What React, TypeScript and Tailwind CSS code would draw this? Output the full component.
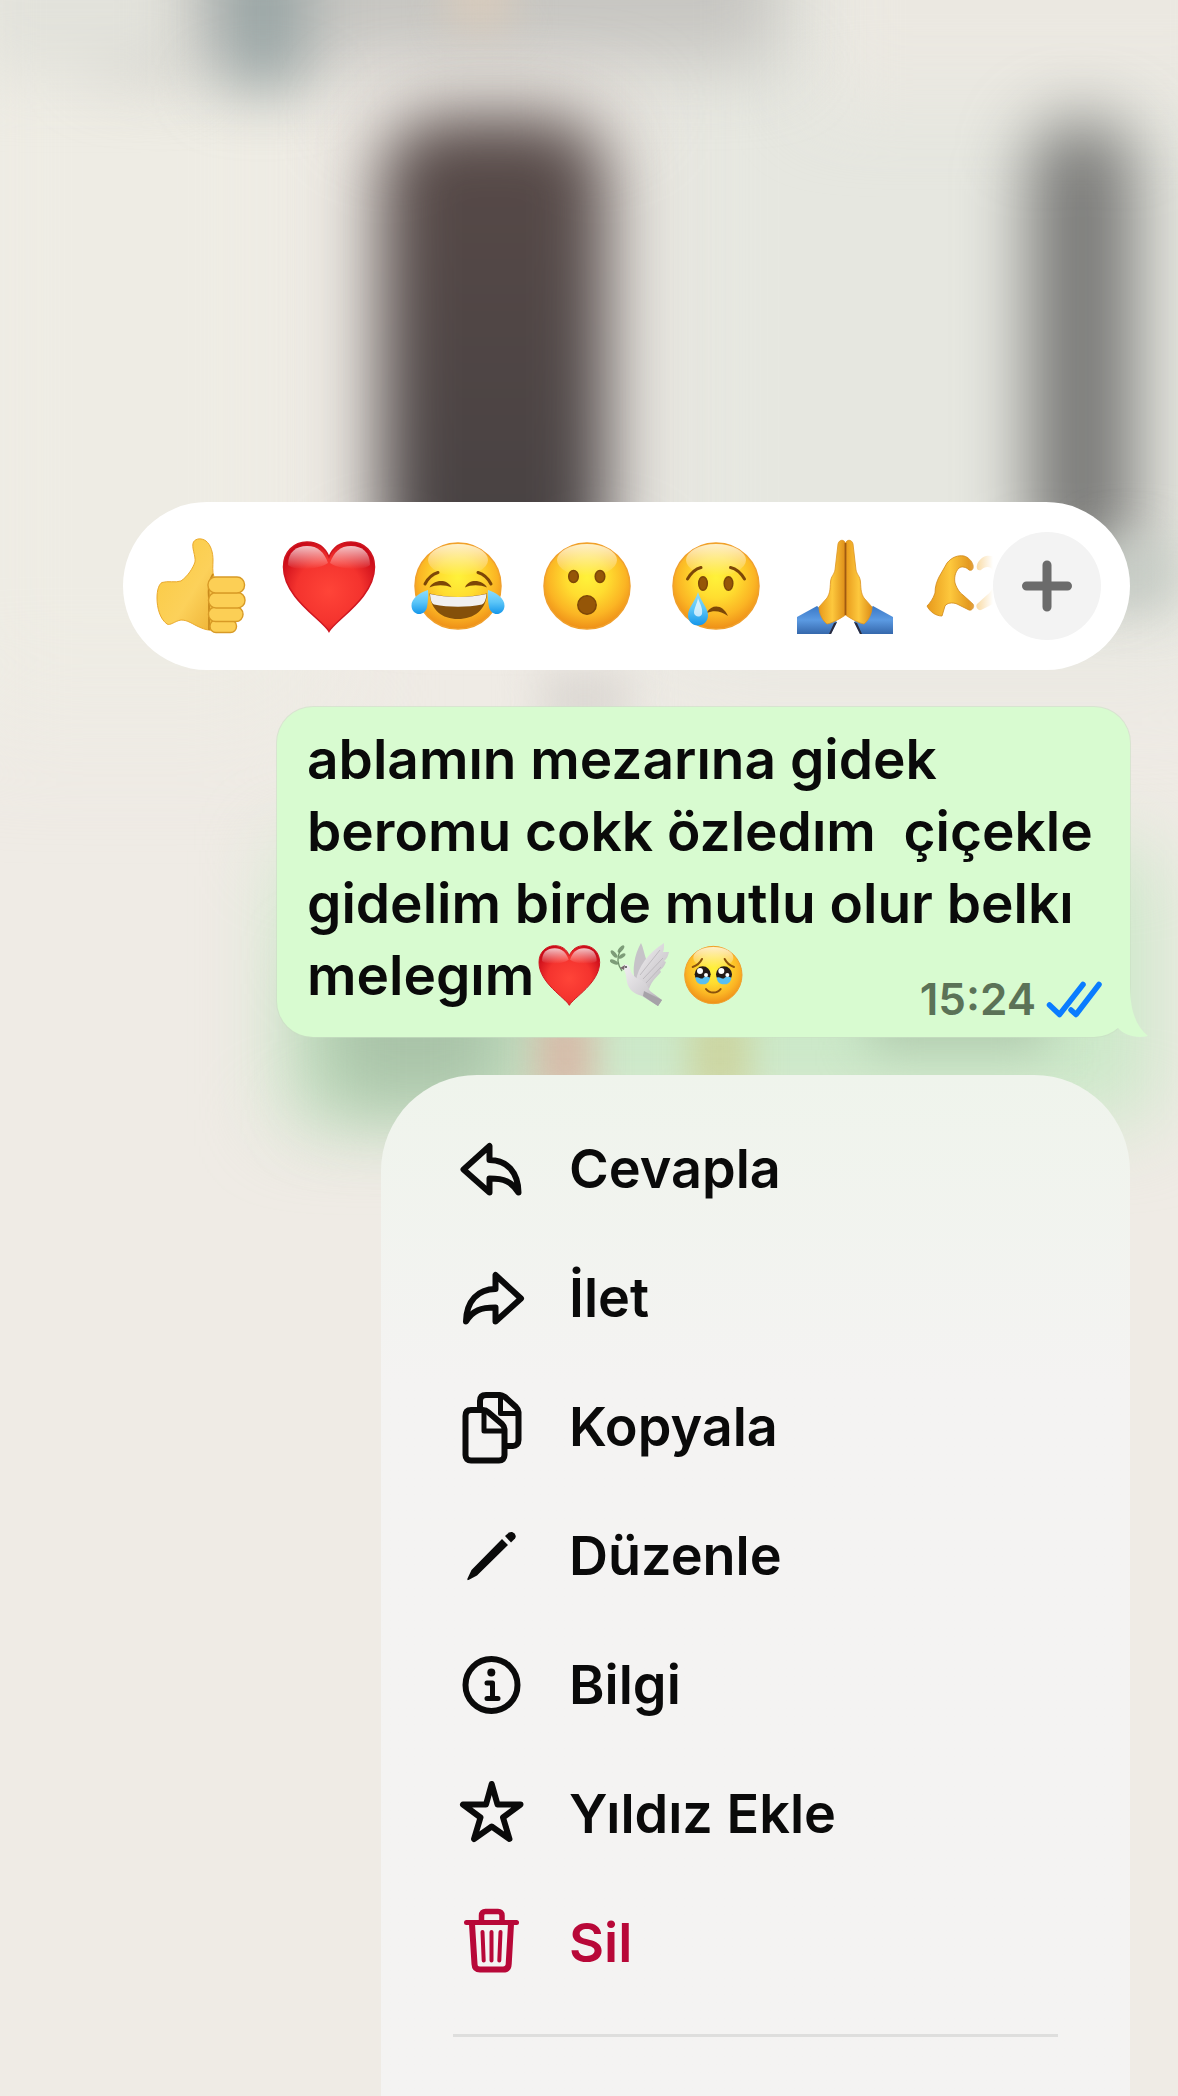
import type { ReactNode } from "react";

type IconProps = { className?: string };

const reactions = [
  { label: "Beğen", Icon: ThumbsUp },
  { label: "Kalp", Icon: Heart },
  { label: "Gülme", Icon: Laughing },
  { label: "Şaşırma", Icon: Surprised },
  { label: "Üzülme", Icon: Crying },
  { label: "Teşekkür", Icon: Praying },
  { label: "Kalp eller", Icon: HeartHands },
];

const actions = [
  { label: "Cevapla", Icon: ReplyIcon },
  { label: "İlet", Icon: ForwardIcon },
  { label: "Kopyala", Icon: CopyIcon },
  { label: "Düzenle", Icon: PencilIcon },
  { label: "Bilgi", Icon: InfoIcon },
  { label: "Yıldız Ekle", Icon: StarIcon },
  { label: "Sil", Icon: TrashIcon, danger: true },
];

// Gradients shared by all the emoji drawings
function EmojiDefs() {
  return (
    <svg className="absolute size-0" aria-hidden="true">
      <defs>
        <radialGradient id="face" cx="0.5" cy="0.4" r="0.6">
          <stop offset="0" stopColor="#fff23a" />
          <stop offset="0.4" stopColor="#ffdd30" />
          <stop offset="0.75" stopColor="#fbb524" />
          <stop offset="1" stopColor="#ee8f18" />
        </radialGradient>
        <linearGradient id="shine" x1="0" y1="0" x2="0" y2="1">
          <stop offset="0" stopColor="#fff" stopOpacity="0.75" />
          <stop offset="1" stopColor="#fff" stopOpacity="0" />
        </linearGradient>
        <radialGradient id="heart" cx="0.5" cy="0.55" r="0.6">
          <stop offset="0" stopColor="#ff4438" />
          <stop offset="0.6" stopColor="#f4332e" />
          <stop offset="1" stopColor="#c90a18" />
        </radialGradient>
        <linearGradient id="tear" x1="0" y1="0" x2="0" y2="1">
          <stop offset="0" stopColor="#8fdcfb" />
          <stop offset="0.5" stopColor="#5cc6f8" />
          <stop offset="1" stopColor="#1496ea" />
        </linearGradient>
        <linearGradient id="skin" x1="0" y1="0" x2="1" y2="1">
          <stop offset="0" stopColor="#fbc93f" />
          <stop offset="0.6" stopColor="#fcd15a" />
          <stop offset="1" stopColor="#eeb235" />
        </linearGradient>
        <linearGradient id="palm" x1="0" y1="0" x2="1" y2="0">
          <stop offset="0" stopColor="#e89a1c" />
          <stop offset="0.5" stopColor="#fdc83d" />
          <stop offset="1" stopColor="#dd8d18" />
        </linearGradient>
        <linearGradient id="sleeve" x1="0" y1="0" x2="0" y2="1">
          <stop offset="0" stopColor="#3a78c6" />
          <stop offset="0.5" stopColor="#5b9ae2" />
          <stop offset="1" stopColor="#3568ac" />
        </linearGradient>
        <linearGradient id="feather" x1="0" y1="0" x2="1" y2="1">
          <stop offset="0" stopColor="#f2f0f2" />
          <stop offset="0.6" stopColor="#d3d0d4" />
          <stop offset="1" stopColor="#a8a4ab" />
        </linearGradient>
      </defs>
    </svg>
  );
}

function Emoji({ className = "size-24", children }: IconProps & { children: ReactNode }) {
  return (
    <svg viewBox="0 0 96 96" fill="none" overflow="visible" className={className} aria-hidden="true">
      {children}
    </svg>
  );
}

function Face() {
  return (
    <>
      <circle cx="47" cy="48" r="43" fill="url(#face)" stroke="#f0a02c" strokeWidth="1.5" />
      <ellipse cx="47" cy="22" rx="30" ry="16" fill="url(#shine)" />
    </>
  );
}

function ThumbsUp() {
  return (
    <Emoji>
      <path
        d="M4 60C4 52 6 46 9 44.500C15 42.500 22 45 28 43C35 38 40 30 42 24C43 18 38 9 40.500 4C43 0 49 0 53 3C58 7 60 15 60 22C60 28 59 33 61 39L62 92C56 93 50 91 44 88C38 85 34 82 28 82C22 83 17 88 14 86C7 81 4 70 4 60Z"
        fill="url(#skin)"
        stroke="#eaa92c"
        strokeWidth="1"
      />
      <path d="M60 36C56 42 55 52 56 62V92" stroke="#c98a1c" strokeWidth="1.800" />
      <g fill="#fccf55" stroke="#d89a26" strokeWidth="1.400">
        <rect x="57" y="82" width="26.500" height="12.500" rx="6" />
        <rect x="55.500" y="69" width="34.500" height="14.500" rx="7" />
        <rect x="55.500" y="54.500" width="36.500" height="15.500" rx="7.500" />
        <rect x="55" y="39" width="36.500" height="16" rx="7.500" />
      </g>
    </Emoji>
  );
}

function Heart({ className }: IconProps) {
  return (
    <Emoji className={className}>
      <path
        d="M47 93.500C41 82 1.500 60 1.500 29C1.500 14 12 4 25 4C35 4 43 9 47 19C51 9 59 4 69 4C82 4 92.500 14 92.500 29C92.500 60 53 82 47 93.500Z"
        fill="url(#heart)"
        stroke="#cf1620"
        strokeWidth="1.500"
      />
      <path d="M6 27C6 14 14 8 25 8C36 8 42 14 46 25C38 31 14 34 6 27Z" fill="url(#shine)" />
      <path d="M88 27C88 14 80 8 69 8C58 8 52 14 48 25C56 31 80 34 88 27Z" fill="url(#shine)" />
    </Emoji>
  );
}

function Laughing() {
  return (
    <Emoji>
      <Face />
      <g stroke="#7d4707" strokeWidth="3" strokeLinecap="round">
        <path d="M14 46C17 40 22 36 27 34.500" />
        <path d="M67 34.500C72 36 77 40 80 46" />
      </g>
      <g fill="#7d4707">
        <path d="M18.500 49.500C22 42 36 40 40.500 49.500C34 46.500 25 46.500 18.500 49.500Z" />
        <path d="M54 49.500C58 40 72 42 76 49.500C69 46.500 60 46.500 54 49.500Z" />
      </g>
      <path d="M18.500 55.500C36 60 58 60 76 55.500C75 72 63 81 47 81C31 81 20 72 18.500 55.500Z" fill="#84500a" />
      <path d="M19 56C36 60 58 60 75.500 56C75 61 74 65 71 66.500C56 69.500 38 69.500 23 66.500C20 65 19.500 61 19 56Z" fill="#f1f0ef" />
      <path d="M17 52C10 54 0 60 0.500 68C1 78 14 79 16 69C17 64 17.500 57 17 52Z" fill="url(#tear)" />
      <path d="M77 52C84 54 94 60 93.500 68C93 78 80 79 78 69C77 64 76.500 57 77 52Z" fill="url(#tear)" />
    </Emoji>
  );
}

function Surprised() {
  return (
    <Emoji>
      <Face />
      <g fill="#955608" stroke="#7d4707" strokeWidth="1.500">
        <ellipse cx="33.500" cy="38.500" rx="4.800" ry="6" />
        <ellipse cx="60" cy="38.500" rx="4.800" ry="6" />
        <circle cx="47" cy="67" r="9.200" />
      </g>
    </Emoji>
  );
}

function Crying() {
  return (
    <Emoji>
      <Face />
      <g stroke="#7d4707" strokeWidth="3" strokeLinecap="round">
        <path d="M18.500 41C22 35 26 31 32 29.500" />
        <path d="M61.500 29.500C68 31 72 35 75.500 41" />
      </g>
      <g fill="#955608" stroke="#7d4707" strokeWidth="1.500">
        <ellipse cx="34" cy="45.500" rx="4.300" ry="6.800" />
        <ellipse cx="59.500" cy="45.500" rx="4.300" ry="6.800" />
      </g>
      <path d="M38 74C43 66 54 66 59 78C52 73 45 72 38 75Z" fill="#7d4707" />
      <path d="M29 54C31 62 39 70 39 77C39 83 35 87.500 29 87.500C23 87.500 19 83 19 77C19 70 27 62 29 54Z" fill="url(#tear)" />
      <path d="M29 60C31 66 34 70 33 76C31 80 26 79 25 75C25 70 28 66 29 60Z" fill="#fff" fillOpacity="0.700" />
    </Emoji>
  );
}

function Praying() {
  return (
    <Emoji>
      <path d="M-1 79L19 68L39 84L33 96H-1Z" fill="url(#sleeve)" />
      <path d="M95 79L75 68L56 84L62 96H95Z" fill="url(#sleeve)" />
      <path d="M39 84L33 96H31L36 85ZM56 84L62 96H64L59 85Z" fill="#2b2b3d" />
      <path
        d="M47.500 6C47 1 41 1 40 6L37 32C36 37 33 38 32.500 44C32 52 32 55 29 60L21 69C21 76 25 83 29 86C34 85 40 82 47.500 77Z"
        fill="url(#palm)"
        stroke="#dd931f"
        strokeWidth="0.800"
      />
      <path
        d="M47.500 6C48 1 54 1 55 6L58 32C59 37 62 38 62.500 44C63 52 63 55 66 60L74 69C74 76 70 83 66 86C61 85 55 82 47.500 77Z"
        fill="url(#palm)"
        stroke="#dd931f"
        strokeWidth="0.800"
      />
      <path d="M47.500 5V77" stroke="#a05a12" strokeWidth="1.800" />
    </Emoji>
  );
}

const handPath =
  "M0 68C3 65 6 61 8 55C8 48 10 43 12 39L20 25C25 19 31 17 37 18C41 19 45 23 46 27C47 31 45 33 42 32C39 29 35 28 32 30C28 34 27 40 28 45C30 51 33 55 36 57L46 66C48 69 45 73 42 72L30 66C25 64 20 65 18 68L15 78C9 78 3 74 0 68Z";

function HeartHands() {
  return (
    <Emoji>
      <path d={handPath} fill="url(#palm)" stroke="#cf8717" strokeWidth="0.800" />
      <path d={handPath} transform="matrix(-1 0 0 1 96 0)" fill="#f3b545" fillOpacity="0.700" />
    </Emoji>
  );
}

function Dove() {
  return (
    <svg viewBox="0 0 64 64" fill="none" className="size-16" aria-hidden="true">
      <g fill="#7d9c78">
        <ellipse cx="11" cy="6" rx="4.500" ry="2" transform="rotate(-50 11 6)" />
        <ellipse cx="4" cy="11" rx="4.500" ry="2" transform="rotate(50 4 11)" />
        <ellipse cx="12" cy="13" rx="4" ry="1.800" transform="rotate(-35 12 13)" />
        <ellipse cx="4" cy="19" rx="4.500" ry="2" transform="rotate(25 4 19)" />
      </g>
      <path d="M10 8C7 14 7 21 12 28" stroke="#6e8f69" strokeWidth="1.300" />
      <path d="M25 37C22 28 24 12 31 0C33 4 34 10 36 16L34 34Z" fill="#c6c3c8" />
      <path d="M26 38C28 24 38 10 54 0C54 4 54 7 53 9L59 9C58 13 57 16 54 18L56 19C54 24 52 26 50 27L51 29C47 34 42 37 39 46Z" fill="url(#feather)" />
      <path d="M30 32L50 7M33 36L53 15M36 40L51 24" stroke="#b6b2b8" strokeWidth="0.800" />
      <path d="M12 24C14 20 19 21 20 25C21 31 25 35 31 37C37 40 38 45 40 48L52 57L48 63L32 53C24 51 18 46 17 39C16 34 16 30 14 27Z" fill="url(#feather)" />
      <path d="M34 48L52 57L48 63L33 53Z" fill="#a6a2a8" />
      <path d="M15 22L10 25L14 27Z" fill="#77676c" />
      <circle cx="16" cy="24" r="1" fill="#444" />
    </svg>
  );
}

function HoldingTears() {
  return (
    <Emoji className="size-16">
      <Face />
      <g stroke="#8a520c" strokeWidth="3" strokeLinecap="round">
        <path d="M16 36C22 34 27 30 30 24" />
        <path d="M78 36C72 34 67 30 64 24" />
      </g>
      <circle cx="31" cy="47" r="12" fill="#241a17" />
      <circle cx="63" cy="47" r="12" fill="#241a17" />
      <path d="M20 52C25 49 29 56 32 52C36 49 39 51 42 52C41 60 36 62 31 62C25 62 21 59 20 52Z" fill="#57bff3" />
      <path d="M52 52C57 49 61 56 64 52C68 49 71 51 74 52C73 60 68 62 63 62C57 62 53 59 52 52Z" fill="#57bff3" />
      <g fill="#fff">
        <circle cx="27" cy="42" r="4.500" />
        <circle cx="36" cy="48" r="3" />
        <circle cx="59" cy="42" r="4.500" />
        <circle cx="68" cy="48" r="3" />
      </g>
      <path d="M36 69C41 76 53 76 58 69" stroke="#8a520c" strokeWidth="3" strokeLinecap="round" />
    </Emoji>
  );
}

function MenuIcon({ children }: { children: ReactNode }) {
  return (
    <svg
      viewBox="0 0 78 78"
      fill="none"
      stroke="currentColor"
      strokeWidth="6"
      strokeLinecap="round"
      strokeLinejoin="round"
      className="size-[78px] shrink-0"
      aria-hidden="true"
    >
      {children}
    </svg>
  );
}

function ReplyIcon() {
  return (
    <MenuIcon>
      <path d="M10.500 39.500L36.500 16V30C54 30 65 42 65.500 62.500C58 51 51 48.500 36.500 48.500V62.500Z" />
    </MenuIcon>
  );
}

function ForwardIcon() {
  return (
    <MenuIcon>
      <path d="M68 39.500L42.500 16V30C25 30 13.500 42 13 62.500C20 51 28 48.500 42.500 48.500V62.500Z" />
    </MenuIcon>
  );
}

function CopyIcon() {
  return (
    <MenuIcon>
      <path d="M27 20V13C27 9 29 7 33 7H47C49 7 50.500 8 52 9L63 19C64.500 20.500 65.500 22 65.500 24V52C65.500 56 63 58 60 58H54" />
      <path d="M47.500 8V25.500H64" strokeWidth="5" />
      <path d="M18 22H30C32 22 33.500 22.500 35 24L49 36C50.500 37.500 51.500 39 51.500 41V67C51.500 70.500 49.500 72.500 46 72.500H18C14.500 72.500 12.500 70.500 12.500 67V28C12.500 24 14.500 22 18 22Z" />
      <path d="M31 24V43H50" strokeWidth="5" />
    </MenuIcon>
  );
}

function PencilIcon() {
  return (
    <MenuIcon>
      <g fill="currentColor" stroke="none">
        <path d="M49 22L55 28L24 58.500L15.500 63C14.500 63.500 14 62.500 14.500 61.500L18.500 53Z" />
        <path d="M52 19L56 15.500C58 14.500 60 14.800 61.500 16.500C63 18.500 63 20 62 21.500L58 25.500Z" />
      </g>
    </MenuIcon>
  );
}

function InfoIcon() {
  return (
    <MenuIcon>
      <circle cx="38.500" cy="39" r="26" />
      <circle cx="38.300" cy="26.500" r="4" fill="currentColor" stroke="none" />
      <path d="M34 37H39.500V52.500M34 52.500H45" strokeWidth="5" />
    </MenuIcon>
  );
}

function StarIcon() {
  return (
    <MenuIcon>
      <path d="M38.700 9L44.500 29.500H67.500L50 42.500L56.500 64L38.700 51.500L21 64L27.500 42.500L10 29.500H33Z" />
    </MenuIcon>
  );
}

function TrashIcon() {
  return (
    <MenuIcon>
      <path d="M13.500 18.500H63.500" strokeWidth="5" />
      <path d="M28.500 17V11.500C28.500 9 30 7.500 32.500 7.500H45C47.500 7.500 49 9 49 11.500V17" strokeWidth="5.500" />
      <path d="M19 20L21.500 60C21.700 64 23.500 65.500 27 65.500H50C53.500 65.500 55.500 64 55.700 60L58 20" />
      <path d="M29.500 28L30.700 56.500M38.500 28V56.500M47.500 28L46.300 56.500" strokeWidth="4" />
    </MenuIcon>
  );
}

function ReadTicks() {
  return (
    <svg viewBox="0 0 56 38" fill="none" stroke="#0a7cff" strokeWidth="5.500" strokeLinecap="round" strokeLinejoin="round" className="h-[38px] w-14" role="img" aria-label="Okundu">
      <path d="M3.500 25L13.500 34.500L37 4.500" />
      <path d="M25 30L30 34.500L53 4.500" />
    </svg>
  );
}

// Out-of-focus chat behind the open message menu
function Backdrop() {
  return (
    <div className="absolute inset-0 -z-10 overflow-hidden bg-[#efebe5]" aria-hidden="true">
      <div className="absolute -top-20 right-[-80px] left-[54%] h-[740px] bg-[#e6e7e0] blur-[60px]" />
      <div className="absolute -top-32 right-[-80px] h-[230px] w-[440px] bg-[#ebe8e1] blur-[40px]" />
      <div className="absolute -top-20 left-[-60px] h-[800px] w-[380px] bg-[#eeece4] blur-[60px]" />
      <div className="absolute -top-24 left-[100px] h-[160px] w-[680px] bg-[#c6c5c1] blur-[36px]" />
      <div className="absolute -top-16 left-[-30px] h-[140px] w-[220px] bg-[#e2e2db] blur-[32px]" />
      <div className="absolute -top-10 left-[450px] h-[70px] w-[60px] bg-[#d8cbbc] blur-[20px]" />
      <div className="absolute -top-16 left-[222px] h-[150px] w-[82px] bg-[#96a3a3] blur-[32px]" />
      <div className="absolute top-[110px] left-[370px] h-[460px] w-[250px] bg-[#d0cbc7] blur-[44px]" />
      <div className="absolute top-[120px] left-[385px] h-[470px] w-[218px] rounded-[60px] bg-linear-to-b from-[#584a48] to-[#464142] blur-[32px]" />
      <div className="absolute top-[120px] right-[44px] h-[460px] w-[104px] rounded-[50px] bg-[#767674] blur-[34px]" />
      <div className="absolute top-[540px] right-0 h-[70px] w-[80px] bg-[#c6ccc5] blur-[24px]" />
      <div className="absolute top-[670px] left-[540px] h-[60px] w-[90px] bg-[#dcd8d3] blur-[20px]" />
      <div className="absolute top-[850px] right-[20px] left-[282px] h-[270px] bg-[#cbe8c8] blur-[40px]" />
      <div className="absolute top-[960px] left-[320px] h-[150px] w-[190px] bg-[#a9c3a8] blur-[36px]" />
      <div className="absolute top-[1010px] left-[535px] h-[90px] w-[60px] bg-[#dba99c] opacity-70 blur-[18px]" />
      <div className="absolute top-[1010px] left-[690px] h-[90px] w-[60px] bg-[#cccd90] opacity-70 blur-[18px]" />
      <div className="absolute top-[960px] right-[130px] h-[90px] w-[180px] bg-[#b0c9ad] blur-[24px]" />
    </div>
  );
}

function ReactionBar() {
  return (
    <section aria-label="Tepkiler" className="flex h-[168px] items-center rounded-full bg-white pr-[29px] pl-[13px]">
      <div className="relative flex min-w-0 flex-1 overflow-hidden">
        {reactions.map(({ label, Icon }) => (
          <button key={label} type="button" aria-label={label} className="flex w-[129px] shrink-0 justify-center">
            <Icon />
          </button>
        ))}
        <div className="pointer-events-none absolute inset-y-0 right-0 w-6 bg-linear-to-r from-white/0 to-white" />
      </div>
      <button type="button" aria-label="Daha fazla tepki" className="flex size-[108px] shrink-0 items-center justify-center rounded-full bg-[#f3f3f3]">
        <svg viewBox="0 0 54 54" stroke="#6b6b6b" strokeWidth="9" strokeLinecap="round" className="size-[54px]" aria-hidden="true">
          <path d="M6.500 27H47.500M27 6V48" />
        </svg>
      </button>
    </section>
  );
}

function MessageBubble() {
  return (
    <article className="relative mt-[37px] ml-[154px] rounded-[36px] bg-[#d8fbd0] pt-4 pr-5 pb-[26px] pl-[30px] ring-1 ring-[#c9dfc3]/60">
      <p className="text-[55px] leading-[72px] font-semibold">
        ablamın mezarına gidek
        <br />
        beromu cokk özledım &nbsp;çiçekle
        <br />
        gidelim birde mutlu olur belkı
        <br />
        <span className="flex items-center">
          melegım
          <span role="img" aria-label="kalp, güvercin, gözyaşını tutan yüz" className="ml-1 flex gap-2">
            <Heart className="size-16" />
            <Dove />
            <HoldingTears />
          </span>
        </span>
      </p>
      <div className="absolute right-7 bottom-4 flex items-center gap-2.5">
        <time className="text-[44px] leading-[44px] font-semibold text-[#5b7257]">15:24</time>
        <ReadTicks />
      </div>
      <svg viewBox="0 0 34 56" className="absolute -right-[18px] -bottom-px h-14 w-[34px]" aria-hidden="true">
        <path d="M0 0H16C16 26 20 42 34 54C22 57 10 53 4 46L0 48Z" fill="#d8fbd0" />
      </svg>
    </article>
  );
}

function ActionMenu() {
  return (
    <nav aria-label="Mesaj işlemleri" className="mt-[38px] ml-[258px] flex-1 rounded-t-[96px] bg-linear-to-b from-[#eff4ec] to-[#f4f3f2] to-30% px-[72px] pt-[29px] pb-[57px]">
      <ul>
        {actions.map(({ label, Icon, danger }) => (
          <li key={label}>
            <button
              type="button"
              className={`flex h-[129px] w-full items-center gap-[38px] text-left text-[54px] leading-[72px] font-semibold ${danger ? "text-[#b80838]" : ""}`}
            >
              <Icon />
              {label}
            </button>
          </li>
        ))}
      </ul>
      <hr className="mt-[27px] border-t-3 border-[#dededd]" />
    </nav>
  );
}

export default function App() {
  return (
    <main
      lang="tr"
      className="relative isolate flex min-h-screen flex-col overflow-hidden pt-[502px] pr-12 pl-[123px] font-['Inter',sans-serif] text-[#0a0a0a]"
    >
      <EmojiDefs />
      <Backdrop />
      <ReactionBar />
      <MessageBubble />
      <ActionMenu />
    </main>
  );
}
